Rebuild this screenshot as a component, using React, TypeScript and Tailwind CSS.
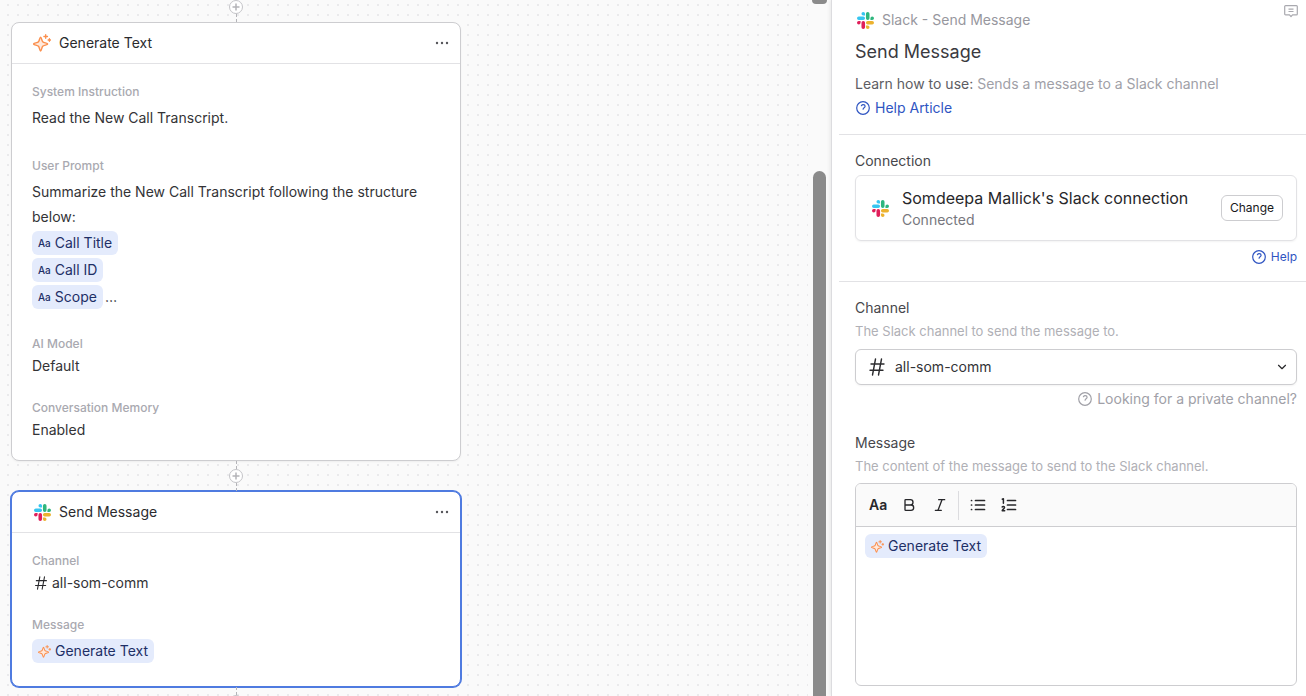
import type { ReactNode } from 'react';
import { Bold, ChevronDown, Italic } from 'lucide-react';

const SlackIcon = () => (
  <svg viewBox="0 0 24 24" className="size-[17px] shrink-0" aria-hidden="true">
    <path fill="#e01e5a" d="M5.042 15.165a2.528 2.528 0 0 1-2.52 2.523A2.528 2.528 0 0 1 0 15.165a2.527 2.527 0 0 1 2.522-2.52h2.52v2.52zM6.313 15.165a2.527 2.527 0 0 1 2.521-2.52 2.527 2.527 0 0 1 2.521 2.52v6.313A2.528 2.528 0 0 1 8.834 24a2.528 2.528 0 0 1-2.521-2.522v-6.313z" />
    <path fill="#36c5f0" d="M8.834 5.042a2.528 2.528 0 0 1-2.521-2.52A2.528 2.528 0 0 1 8.834 0a2.528 2.528 0 0 1 2.521 2.522v2.52H8.834zM8.834 6.313a2.528 2.528 0 0 1 2.521 2.521 2.528 2.528 0 0 1-2.521 2.521H2.522A2.528 2.528 0 0 1 0 8.834a2.528 2.528 0 0 1 2.522-2.521h6.312z" />
    <path fill="#2eb67d" d="M18.956 8.834a2.528 2.528 0 0 1 2.522-2.521A2.528 2.528 0 0 1 24 8.834a2.528 2.528 0 0 1-2.522 2.521h-2.522V8.834zM17.688 8.834a2.528 2.528 0 0 1-2.523 2.521 2.527 2.527 0 0 1-2.52-2.521V2.522A2.527 2.527 0 0 1 15.165 0a2.528 2.528 0 0 1 2.523 2.522v6.312z" />
    <path fill="#ecb22e" d="M15.165 18.956a2.528 2.528 0 0 1 2.523 2.522A2.528 2.528 0 0 1 15.165 24a2.527 2.527 0 0 1-2.52-2.522v-2.522h2.52zM15.165 17.688a2.527 2.527 0 0 1-2.52-2.523 2.526 2.526 0 0 1 2.52-2.52h6.313A2.527 2.527 0 0 1 24 15.165a2.528 2.528 0 0 1-2.522 2.523h-6.313z" />
  </svg>
);

const SparkleIcon = ({ className }: { className: string }) => (
  <svg viewBox="0 0 18 18" className={className} fill="none" stroke="#fb8f4d" strokeLinecap="round" strokeLinejoin="round" aria-hidden="true">
    <path strokeWidth="1.4" fill="#ffe9dc" d="M7.6 3.2c.9 0 1.1 3.4 2.1 4.5s5 1.300 5 2.300-4 1.200-5 2.300-1.200 4.700-2.100 4.700-1.100-3.600-2.100-4.700-5-1.300-5-2.300 4-1.200 5-2.300 1.200-4.500 2.100-4.500z" />
    <path strokeWidth="1.3" d="M12.700.7v3.600M10.900 2.500h3.600M16.400 4.700v2.600M15.100 6h2.600" />
  </svg>
);

const HashIcon = ({ className }: { className: string }) => (
  <svg viewBox="0 0 16 18" className={className} fill="none" stroke="#2b2b2e" strokeWidth="1.4" strokeLinecap="round" aria-hidden="true">
    <path d="M6.500 1 3.500 17M12.500 1 9.500 17M2 6h13M1 12.300h13" />
  </svg>
);

const HelpIcon = () => (
  <svg viewBox="0 0 14 14" className="size-3.5 shrink-0" fill="none" stroke="currentColor" strokeWidth="1.200" strokeLinecap="round" aria-hidden="true">
    <circle cx="7" cy="7" r="6.300" />
    <path d="M5.400 4.700c.5-.8 1.200-1 1.800-1 1.100 0 1.900.7 1.900 1.600 0 1.500-2 1.400-2 2.900" />
  </svg>
);

const MoreIcon = () => (
  <svg viewBox="0 0 14 4" className="h-1 w-3.5" fill="#55555a" aria-hidden="true">
    <circle cx="2" cy="2" r="1.200" />
    <circle cx="7" cy="2" r="1.200" />
    <circle cx="12" cy="2" r="1.200" />
  </svg>
);

const CommentIcon = () => (
  <svg viewBox="0 0 14 13" className="h-[13px] w-3.5" fill="none" stroke="#a9a9af" strokeWidth="1.200" strokeLinejoin="round" aria-hidden="true">
    <path d="M1.600.7h10.800a.9.9 0 0 1 .9.9v7.300a.9.9 0 0 1-.9.9H8.500L7 11.600 5.500 9.800H1.600a.9.9 0 0 1-.9-.9V1.600a.9.9 0 0 1 .9-.9zM4.500 4.200h5M4.500 6.500h5" />
  </svg>
);

const BulletListIcon = () => (
  <svg viewBox="0 0 16 14" className="h-3.5 w-4" fill="none" stroke="#27272a" strokeWidth="1.700" strokeLinecap="round" aria-hidden="true">
    <path d="M5.500 2.500h9M5.500 7h9M5.500 11.500h9M1.500 2.500h.1M1.500 7h.1M1.500 11.500h.1" />
  </svg>
);

const NumberListIcon = () => (
  <svg viewBox="0 0 16 14" className="h-3.5 w-4" fill="none" stroke="#27272a" strokeLinecap="round" strokeLinejoin="round" aria-hidden="true">
    <path strokeWidth="1.700" d="M6.500 2.500h8M6.500 7h8M6.500 11.500h8" />
    <path strokeWidth="1.500" d="M1.300 1.300 2.400.8v4.400M1.200 9c.5-.8 2.300-.7 2.300.4 0 1.200-2.300 2.200-2.300 3.300h2.500" />
  </svg>
);

const Chip = ({ icon, children }: { icon?: ReactNode; children: ReactNode }) => (
  <span className="inline-flex h-6 items-center gap-1 rounded-md bg-[#e4ebfc] px-1.5 text-sm text-[#1e2f66]">
    {icon ?? <span className="text-[10px] font-medium">Aa</span>}
    {children}
  </span>
);

const GenerateTextChip = () => <Chip icon={<SparkleIcon className="size-[13px]" />}>Generate Text</Chip>;

const Connector = () => (
  <div className="flex h-[30px] flex-col items-center">
    <div className="w-px flex-1 border-l border-dashed border-[#b4b4b8]" />
    <button type="button" aria-label="Add step" className="flex size-3.5 items-center justify-center rounded-full border border-[#c4c4c8] bg-white">
      <svg viewBox="0 0 8 8" className="size-2" stroke="#b4b4b8" strokeWidth="1.500" aria-hidden="true">
        <path d="M4 .5v7M.5 4h7" />
      </svg>
    </button>
    <div className="w-px flex-1 border-l border-dashed border-[#b4b4b8]" />
  </div>
);

const StepHeader = ({ icon, title }: { icon: ReactNode; title: string }) => (
  <header className="flex h-[41px] items-center border-b border-[#e2e2e5] pr-[11px] pl-[21px]">
    <span className="flex w-[18px] justify-end">{icon}</span>
    <h2 className="ml-2 flex-1 text-sm text-[#2b2b2e]">{title}</h2>
    <button type="button" aria-label={`${title} options`}>
      <MoreIcon />
    </button>
  </header>
);

const FieldLabel = ({ children }: { children: ReactNode }) => (
  <h3 className="text-xs font-medium text-[#a9a9b0]">{children}</h3>
);

const App = () => {
  const fields = ['Call Title', 'Call ID', 'Scope'];
  const settings = [
    { name: 'AI Model', value: 'Default' },
    { name: 'Conversation Memory', value: 'Enabled' },
  ];

  return (
    <div className="flex h-screen overflow-hidden bg-white font-[Inter,sans-serif] text-sm text-[#333336]">
      {/* Workflow canvas */}
      <main className="flex min-w-0 flex-1 overflow-hidden bg-[#fafafa]">
        <div className="min-w-0 flex-1 bg-[radial-gradient(circle,#eaeaec_1px,transparent_1px)] bg-[size:10px_10px] bg-[position:3px_0px] pl-[11px]">
          <div className="-mt-2 w-[450px]">
            <Connector />
            <section className="rounded-lg border border-[#cdcdd0] bg-white shadow-xs">
              <StepHeader icon={<SparkleIcon className="size-[18px]" />} title="Generate Text" />
              <div className="p-5">
                <FieldLabel>System Instruction</FieldLabel>
                <p className="mt-[5px] mb-7 leading-[25px]">Read the New Call Transcript.</p>
                <FieldLabel>User Prompt</FieldLabel>
                <p className="mt-[5px] leading-[25px]">Summarize the New Call Transcript following the structure below:</p>
                <div className="mt-0.5 mb-[27px] flex flex-col gap-[3px]">
                  {fields.map((field, idx) => (
                    <div key={field} className="flex items-center gap-0.5">
                      <Chip>{field}</Chip>
                      {idx === fields.length - 1 && <span>…</span>}
                    </div>
                  ))}
                </div>
                <div className="flex flex-col gap-6">
                  {settings.map((setting) => (
                    <div key={setting.name}>
                      <FieldLabel>{setting.name}</FieldLabel>
                      <p className="mt-1">{setting.value}</p>
                    </div>
                  ))}
                </div>
              </div>
            </section>
            <Connector />
            <section className="rounded-lg border border-[#4f7be0] bg-white ring-1 ring-[#4f7be0]">
              <StepHeader icon={<SlackIcon />} title="Send Message" />
              <div className="px-5 pt-5 pb-[23px]">
                <FieldLabel>Channel</FieldLabel>
                <p className="mt-1 mb-6 flex items-center gap-1 pl-0.5">
                  <HashIcon className="h-3.5 w-3.5" />
                  all-som-comm
                </p>
                <FieldLabel>Message</FieldLabel>
                <div className="mt-1.5 flex">
                  <GenerateTextChip />
                </div>
              </div>
            </section>
            <Connector />
          </div>
        </div>
        {/* Scroll track */}
        <div className="flex w-[23px] shrink-0 flex-col items-center pr-[1px]">
          <div className="h-1 w-[15px] rounded-b-full bg-[#8b8b8b]" />
          <div className="mt-[167px] w-[13px] flex-1 rounded-t-full bg-[#8b8b8b]" />
        </div>
      </main>

      {/* Step settings */}
      <aside className="z-10 w-[475px] shrink-0 border-l border-[#dcdcdf] bg-white pl-[7px] shadow-[-1px_0_4px_rgba(0,0,0,0.08)]">
        <div className="flex h-[134px] items-start justify-between pl-4 pr-2">
          <div className="pt-2.5">
            <p className="flex items-center gap-2 pl-0.5 text-[#97979e]">
              <SlackIcon />
              Slack - Send Message
            </p>
            <h1 className="mt-2 text-lg leading-7 text-[#3a3a3f]">Send Message</h1>
            <p className="mt-2 text-[#a0a0a7]">
              <span className="text-[#5d5d63]">Learn how to use:</span> Sends a message to a Slack channel
            </p>
            <a href="#help" className="mt-1 inline-flex items-center gap-[5px] pl-px text-[#2f55c2]">
              <HelpIcon />
              Help Article
            </a>
          </div>
          <button type="button" aria-label="Comments" className="pt-[5px]">
            <CommentIcon />
          </button>
        </div>

        <section className="border-t border-[#e2e2e5] pt-4 pr-[9px] pb-4 pl-4">
          <h2 className="text-[#47474c]">Connection</h2>
          <div className="mt-1 flex h-[66px] items-center rounded-md border border-[#e2e2e5] pr-[13px] pl-4 shadow-xs">
            <SlackIcon />
            <div className="ml-[13px] flex-1">
              <p className="text-base leading-6 text-[#27272a]">Somdeepa Mallick's Slack connection</p>
              <p className="text-[#77777e]">Connected</p>
            </div>
            <button type="button" className="h-[26px] rounded-md border border-[#cdcdd0] px-2 text-xs text-[#18181b]">
              Change
            </button>
          </div>
          <div className="mt-2 flex justify-end">
            <a href="#connection-help" className="flex h-4 items-center gap-[5px] text-xs text-[#2f55c2]">
              <HelpIcon />
              Help
            </a>
          </div>
        </section>

        <section className="border-t border-[#e2e2e5] pt-4 pr-[9px] pl-4">
          <label htmlFor="channel" className="block text-[#47474c]">Channel</label>
          <p className="mt-[3px] text-[13px] leading-5 text-[#b0b0b6]">The Slack channel to send the message to.</p>
          <div className="mt-2 grid grid-cols-1 items-center">
            <select id="channel" className="col-start-1 row-start-1 h-9 w-full appearance-none rounded-md border border-[#cdcdd0] bg-white pl-[39px] text-sm shadow-xs">
              <option>all-som-comm</option>
            </select>
            <HashIcon className="pointer-events-none col-start-1 row-start-1 ml-3.5 h-[18px] w-4" />
            <ChevronDown className="pointer-events-none col-start-1 row-start-1 mr-2 size-3.5 justify-self-end text-[#27272a]" />
          </div>
          <div className="mt-1 flex justify-end">
            <a href="#private-channel" className="flex items-center gap-[5px] text-[#a0a0a7]">
              <HelpIcon />
              Looking for a private channel?
            </a>
          </div>

          <label htmlFor="message" className="mt-6 block text-[#47474c]">Message</label>
          <p className="mt-[3px] text-[13px] leading-5 text-[#b0b0b6]">The content of the message to send to the Slack channel.</p>
          <div className="mt-[7px] flex h-[203px] flex-col overflow-hidden rounded-md border border-[#cdcdd0]">
            <div className="flex h-[43px] items-center border-b border-[#cdcdd0] bg-[#fafafa] pl-[13px]">
              <button type="button" aria-label="Text style" className="w-8 text-left text-sm font-semibold text-[#27272a]">Aa</button>
              <button type="button" aria-label="Bold" className="w-[31px]">
                <Bold className="size-4 text-[#27272a]" />
              </button>
              <button type="button" aria-label="Italic" className="w-[26px]">
                <Italic className="size-4 text-[#27272a]" />
              </button>
              <div className="mr-[11px] h-[29px] w-px bg-[#dcdcdf]" />
              <button type="button" aria-label="Bulleted list" className="w-[31px]">
                <BulletListIcon />
              </button>
              <button type="button" aria-label="Numbered list">
                <NumberListIcon />
              </button>
            </div>
            <div className="flex flex-1 flex-col items-start px-[9px] pt-[7px]">
              <GenerateTextChip />
              <textarea id="message" className="w-full flex-1 resize-none outline-none" />
            </div>
          </div>
        </section>
      </aside>
    </div>
  );
};

export default App;
